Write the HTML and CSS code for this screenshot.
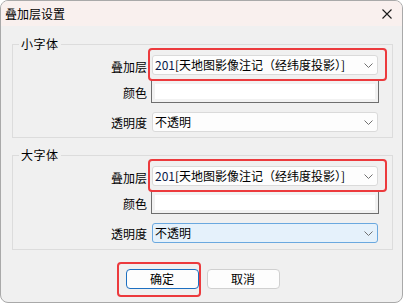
FILE: index.html
```html
<!DOCTYPE html>
<html lang="zh">
<head>
<meta charset="utf-8">
<title>叠加层设置</title>
<link rel="stylesheet" href="styles.css">
</head>
<body>
<div class="window">
  <div class="titlebar">
    <span class="title">叠加层设置</span>
    <span class="close">
      <svg width="10" height="10" viewBox="0 0 10 10"><path d="M0.5 0.5L9.5 9.5M9.5 0.5L0.5 9.5" stroke="#1a1a1a" stroke-width="1.1" fill="none"/></svg>
    </span>
  </div>
  <div class="content">
    <fieldset class="group">
      <legend class="legend">小字体</legend>
      <div class="row row-layer">
        <span class="label">叠加层</span>
        <div class="combo marked"><span class="combo-text"><span class="num">201</span>[天地图影像注记（经纬度投影）]</span><svg class="chev" width="9" height="5" viewBox="0 0 9 5"><path d="M0.5 0.5L4.5 4.5L8.5 0.5" stroke="#707070" fill="none"/></svg></div>
      </div>
      <div class="row row-color">
        <span class="label">颜色</span>
        <div class="edit"></div>
      </div>
      <div class="row row-alpha">
        <span class="label">透明度</span>
        <div class="combo"><span class="combo-text">不透明</span><svg class="chev" width="9" height="5" viewBox="0 0 9 5"><path d="M0.5 0.5L4.5 4.5L8.5 0.5" stroke="#707070" fill="none"/></svg></div>
      </div>
    </fieldset>
    <fieldset class="group group-second">
      <legend class="legend">大字体</legend>
      <div class="row row-layer">
        <span class="label">叠加层</span>
        <div class="combo marked"><span class="combo-text"><span class="num">201</span>[天地图影像注记（经纬度投影）]</span><svg class="chev" width="9" height="5" viewBox="0 0 9 5"><path d="M0.5 0.5L4.5 4.5L8.5 0.5" stroke="#707070" fill="none"/></svg></div>
      </div>
      <div class="row row-color">
        <span class="label">颜色</span>
        <div class="edit"></div>
      </div>
      <div class="row row-alpha">
        <span class="label">透明度</span>
        <div class="combo focused"><span class="combo-text">不透明</span><svg class="chev" width="9" height="5" viewBox="0 0 9 5"><path d="M0.5 0.5L4.5 4.5L8.5 0.5" stroke="#707070" fill="none"/></svg></div>
      </div>
    </fieldset>
    <div class="buttons">
      <button class="btn btn-default">确定</button>
      <button class="btn">取消</button>
    </div>
  </div>
</div>
</body>
</html>
```
FILE: styles.css
```css
html, body {
  margin: 0;
  padding: 0;
  background: #ffffff;
}
body {
  font-family: "Noto Sans CJK SC", "Noto Sans", sans-serif;
  font-size: 12px;
  color: #000;
}
.window {
  width: 403px;
  height: 303px;
  box-sizing: border-box;
  border: 1px solid #a9a9a9;
  border-radius: 8px;
  background: #f0f0f0;
  overflow: hidden;
}
.titlebar {
  height: 25px;
  background: #f9f0ee;
  display: flex;
  align-items: center;
  justify-content: space-between;
  padding: 0 10px 0 4px;
}
.title {
  font-size: 12px;
  line-height: 16px;
}
.close {
  display: flex;
  width: 10px;
  height: 10px;
}
.content {
  padding: 10px 9px 0 11px;
}
.group {
  margin: 0;
  padding: 3px 14px 5px 0;
  border: 1px solid #dcdcdc;
  min-width: 0;
}
.group-second {
  margin-top: 9px;
  padding-bottom: 6px;
}
.legend {
  margin-left: 6px;
  padding: 0 2px;
  font-size: 12px;
  line-height: 16px;
  letter-spacing: 0.5px;
}
.row {
  display: grid;
  grid-template-columns: 134px 226px;
  column-gap: 5px;
  align-items: center;
}
.row-color {
  margin-top: 5px;
}
.row-alpha {
  margin-top: 9px;
}
.label {
  text-align: right;
  line-height: 16px;
  padding-top: 2px;
}
.row-layer .label {
  padding-top: 4px;
}
.combo {
  position: relative;
  height: 20px;
  box-sizing: border-box;
  border: 1px solid #dadada;
  border-radius: 3px;
  background: #fdfdfd;
  display: flex;
  align-items: center;
  justify-content: space-between;
  padding: 0 4px 0 2px;
}
.combo-text {
  line-height: 16px;
  white-space: nowrap;
}
.num {
  color: #0a1a4a;
}
.focused {
  border-color: #6aa8df;
  background: #e5f1fb;
}
.marked::after {
  content: "";
  position: absolute;
  top: -8px;
  left: -5px;
  right: -10px;
  bottom: -7px;
  border: 2px solid #ec3a3d;
  border-radius: 4px;
}
.chev {
  display: block;
}
.edit {
  height: 23px;
  width: 228px;
  margin-left: -1px;
  box-sizing: border-box;
  border: 1px solid #6e6e6e;
  background: #ffffff;
  box-shadow: inset 0 0 0 3px #f2f2f2;
}
.buttons {
  display: flex;
  justify-content: center;
  gap: 8px;
  margin-top: 19px;
}
.btn {
  position: relative;
  width: 73px;
  height: 20px;
  box-sizing: border-box;
  border: 1px solid #d0d0d0;
  border-radius: 4px;
  background: #fdfdfd;
  font-family: "Noto Sans CJK SC", "Noto Sans", sans-serif;
  font-size: 12px;
  line-height: 16px;
  color: #000;
  padding: 0;
}
.btn-default {
  border-color: #1d6fc1;
}
.btn-default::after {
  content: "";
  position: absolute;
  top: -8px;
  left: -10px;
  right: -3px;
  bottom: -9px;
  border: 2px solid #ec3a3d;
  border-radius: 4px;
}
```
